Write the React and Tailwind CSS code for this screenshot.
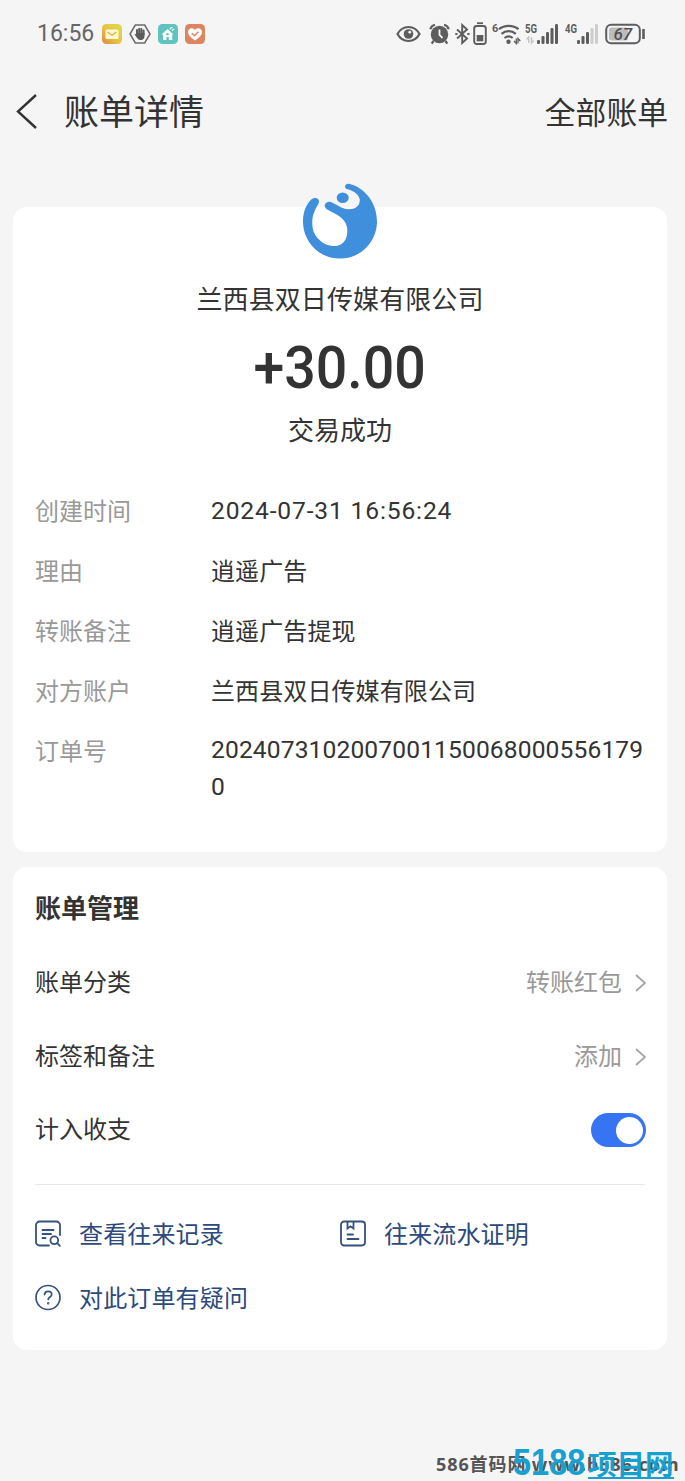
import React, { useState } from "react";

const details = [
  { label: "创建时间", value: "2024-07-31 16:56:24", type: "date" },
  { label: "理由", value: "逍遥广告" },
  { label: "转账备注", value: "逍遥广告提现" },
  { label: "对方账户", value: "兰西县双日传媒有限公司" },
  { label: "订单号", value: "20240731020070011500680005561790", type: "number" },
];

const MailIcon = () => (
  <svg width="20" height="20" viewBox="0 0 20 20">
    <defs>
      <linearGradient id="mail" x1="1" y1="0" x2="0" y2="1">
        <stop offset="0" stopColor="#d9e04a" />
        <stop offset="0.55" stopColor="#e9c043" />
        <stop offset="1" stopColor="#d98b3c" />
      </linearGradient>
    </defs>
    <rect width="20" height="20" rx="4.5" fill="url(#mail)" />
    <rect x="3.5" y="5.5" width="13" height="9.5" rx="1.5" fill="#fdf7d4" />
    <path d="M5.5 8l4.5 3.2L14.5 8" fill="none" stroke="#e0b23f" strokeWidth="1.3" />
  </svg>
);

const HandIcon = () => (
  <svg width="22" height="20" viewBox="0 0 22 20" fill="none">
    <path d="M6.3 1h9.400L21 10l-5.300 9H6.300L1 10z" stroke="#6a6a6a" strokeWidth="1.5" />
    <path
      d="M8 10V6M10.200 9.500V4.700M12.400 9.500V5M14.600 10.500V6.500"
      stroke="#5c5c5c"
      strokeWidth="2"
      strokeLinecap="round"
    />
    <path d="M7.100 9h8.400v3.200c0 2.300-1.500 3.800-3.600 3.800-2 0-3-.8-4-2.300L5.600 10.600c.5-.9 1.100-.7 1.500-.2z" fill="#5c5c5c" />
  </svg>
);

const HouseIcon = () => (
  <svg width="20" height="20" viewBox="0 0 20 20">
    <rect width="20" height="20" rx="4.500" fill="#5fc3c0" />
    <path d="M3.500 10.500L9.500 5l6 5.500h-1.300V16h-3.400v-3H8.400v3H5v-5.500z" fill="#fff" />
    <circle cx="9.500" cy="10.200" r="1.200" fill="#5fc3c0" />
    <path d="M12 5.500c0-1.500 1-2 2.500-1.700M14.300 7c0-1.200.8-1.700 2-1.500" fill="none" stroke="#e9fffd" strokeWidth="1.200" />
  </svg>
);

const HeartIcon = () => (
  <svg width="20" height="20" viewBox="0 0 20 20">
    <rect width="20" height="20" rx="4.500" fill="#dc8560" />
    <path d="M10 16.500C5.500 13.500 3 11 3 8c0-4 5-5.200 7-2 2-3.200 7-2 7 2 0 3-2.500 5.500-7 8.500z" fill="#fff" />
    <path d="M6.800 9.300l2.700 2.500 3.900-4" fill="none" stroke="#dc8560" strokeWidth="1.500" />
  </svg>
);

const EyeIcon = () => (
  <svg width="25" height="18" viewBox="0 0 25 18">
    <path d="M1.500 9C4 4.300 8 2 12.500 2S21 4.300 23.500 9C21 13.700 17 16 12.500 16S4 13.700 1.500 9z" fill="none" stroke="#5d5d5d" strokeWidth="2.200" />
    <circle cx="12.500" cy="9" r="4.800" fill="#5d5d5d" />
    <circle cx="13.800" cy="7.200" r="1.400" fill="#f5f5f5" />
  </svg>
);

const AlarmIcon = () => (
  <svg width="21" height="22" viewBox="0 0 21 22" fill="none" stroke="#5d5d5d">
    <circle cx="10.500" cy="11.500" r="8.700" fill="#5d5d5d" stroke="none" />
    <path d="M1.300 6.200C2 3.700 3.700 2.200 6 1.700M19.700 6.200C19 3.700 17.300 2.200 15 1.700" strokeWidth="2.200" />
    <path d="M4.500 18l-1.800 2.600M16.500 18l1.800 2.600" strokeWidth="2.200" />
    <path d="M10.500 6.500v5.500l3 3" stroke="#f5f5f5" strokeWidth="1.800" />
  </svg>
);

const BluetoothIcon = () => (
  <svg width="15" height="22" viewBox="0 0 15 22" fill="none" stroke="#5d5d5d" strokeWidth="1.900">
    <path d="M2 6.500l10 9-4.800 4.500V2L12 6.500l-10 9" />
    <path d="M.3 11h2.200M12.300 11h2.200" />
  </svg>
);

const DeviceBatteryIcon = () => (
  <svg width="14" height="23" viewBox="0 0 14 23">
    <path d="M4 1.200h6" stroke="#5d5d5d" strokeWidth="1.800" />
    <rect x="1.200" y="4" width="11.600" height="18" rx="2.500" fill="none" stroke="#5d5d5d" strokeWidth="1.900" />
    <rect x="3.700" y="13" width="6.600" height="6.300" fill="#5d5d5d" />
  </svg>
);

const WifiIcon = () => (
  <svg width="29" height="22" viewBox="0 0 29 22" fill="none" stroke="#5d5d5d">
    <text x="0" y="9" fontSize="11" fontWeight="700" fontFamily="Roboto, sans-serif" fill="#5d5d5d" stroke="none">6</text>
    <path d="M7 6.200c5.500-4.500 14-4.500 19.500 0M9.500 10.800c4.300-3.600 10-3.600 14.300 0M12.500 15c2.600-2 5.600-2 8.200 0" strokeWidth="2.200" />
    <circle cx="16.500" cy="18.800" r="2.200" fill="#5d5d5d" stroke="none" />
    <path d="M24.300 15.500v5L22 18M26 20.500v-5l2.300 2.500" strokeWidth="1.300" />
  </svg>
);

const SignalIcon = ({ label, strength, arrows }) => (
  <svg width="34" height="22" viewBox="0 0 34 22">
    <text x="0" y="9.500" fontSize="12" fontWeight="700" fontFamily="Roboto, sans-serif" fill="#5d5d5d" textLength="12" lengthAdjust="spacingAndGlyphs">
      {label}
    </text>
    {arrows && <path d="M1.500 16.500L3.700 14v6M6.500 14v6l2.200-2.500" fill="none" stroke="#c4c4c4" strokeWidth="1.400" />}
    {[4, 8, 12, 16, 20].map((h, i) => (
      <rect key={h} x={12 + i * 4.5} y={21 - h} width="3" height={h} rx="1.200" fill={i < strength ? "#5d5d5d" : "#cdcdcd"} />
    ))}
  </svg>
);

const BatteryIcon = () => (
  <svg width="41" height="22" viewBox="0 0 41 22">
    <rect x="1.200" y="1.700" width="33.600" height="18.600" rx="5" fill="none" stroke="#5d5d5d" strokeWidth="2" />
    <rect x="4" y="4.500" width="19" height="13" rx="2.500" fill="#bdbdbd" />
    <text x="8.500" y="17" fontSize="17" fontStyle="italic" fontWeight="500" fontFamily="Roboto, sans-serif" fill="#505050">67</text>
    <path d="M38.500 6v10" stroke="#5d5d5d" strokeWidth="2.600" />
  </svg>
);

const CompanyLogo = () => (
  <svg width="76" height="76" viewBox="0 0 76 76" className="shrink-0">
    <path
      d="M16.500 20.500C18.500 16 14 13 9.500 16.300C3.500 22 1 30 1 38.500C1 59 17.500 75.600 38 75.600C58.500 75.600 75 59 75 38.500C75 21 64 5 47 .8C43 .3 41.500 4.500 44.700 6C50 7.300 56 10 57.700 16C58.500 23 53 26.500 46.500 26.300C39 26 34 20.500 27.800 18.700C23 18.500 20.800 23 24.700 26.300C30 29.500 36 31.500 40 35.500C43.500 38.500 45.500 43 45.300 48C45.500 57 40 63 33 63C26 63 20.500 60.500 16.500 56C11.500 51 10 45 10.300 38C10.600 31 13.500 26 16.500 20.500Z"
      fill="#408fdd"
    />
    <ellipse cx="40.700" cy="14.700" rx="6" ry="5.200" fill="#408fdd" />
  </svg>
);

const RecordsIcon = () => (
  <svg width="26" height="27" viewBox="0 0 26 27" fill="none" stroke="#35517f" strokeWidth="1.800" strokeLinecap="round">
    <path d="M14 25.500H4.500a3.500 3.500 0 01-3.500-3.500V5a3.500 3.500 0 013.500-3.500H21.500A3.500 3.500 0 0125 5v10" />
    <path d="M7.500 10h11M7.500 14h8.500M7.500 18h3" />
    <circle cx="19.300" cy="20.300" r="3.900" />
    <path d="M22.300 23.200l2.500 2.600" />
  </svg>
);

const CertificateIcon = () => (
  <svg width="26" height="27" viewBox="0 0 26 27" fill="none" stroke="#35517f" strokeWidth="1.800" strokeLinecap="round">
    <rect x="1" y="1.500" width="24" height="24" rx="3.200" />
    <path d="M7.500 1.800v6.700l3-2.200 3 2.200V1.800" />
    <path d="M7.500 14.500h5.500M7.500 19h11" />
  </svg>
);

const QuestionIcon = () => (
  <svg width="26" height="27" viewBox="0 0 26 27" fill="none" stroke="#35517f" strokeWidth="1.700" strokeLinecap="round">
    <circle cx="13" cy="13.500" r="12" />
    <path d="M9.500 10.700c.2-2.200 1.600-3.400 3.600-3.400s3.600 1.300 3.600 3.200c0 2.500-3.500 2.600-3.500 5" />
    <circle cx="13.200" cy="19.300" r=".4" fill="#35517f" />
  </svg>
);

const Chevron = () => (
  <svg width="11" height="18" viewBox="0 0 11 18" fill="none" stroke="#a3a3a3" strokeWidth="1.700">
    <path d="M1 1l9 8-9 8" />
  </svg>
);

const valueStyles = {
  date: "-mb-px font-['Roboto',sans-serif] text-[24.6px] leading-[37px] tracking-[0.85px]",
  number: "font-['Roboto',sans-serif] text-[24.6px] leading-[37px] tracking-[0.12px] -mt-px",
  text: "tracking-[0.1px]",
};

const ManageRow = ({ label, value }) => (
  <button className="flex h-[74px] w-full items-center justify-between">
    <span>{label}</span>
    <span className="-mr-px flex items-center gap-[13px] text-[#999]">
      {value}
      <span className="pt-1">
        <Chevron />
      </span>
    </span>
  </button>
);

const App = () => {
  const [counted, setCounted] = useState(true);

  return (
    <div className="relative h-[1481px] w-full overflow-hidden bg-[#f5f5f5] font-['Noto_Sans_CJK_SC',sans-serif] text-[24px] leading-[36px] text-[#333]">
      {/* Status bar */}
      <div className="flex h-[67px] items-center justify-between pr-[39px] pl-[37px]">
        <div className="flex items-center gap-[7px]">
          <span className="w-[58px] font-['Roboto',sans-serif] text-[23px] whitespace-nowrap text-[#666]">16:56</span>
          <MailIcon />
          <HandIcon />
          <HouseIcon />
          <HeartIcon />
        </div>
        <div className="flex items-center">
          <EyeIcon />
          <span className="ml-2">
            <AlarmIcon />
          </span>
          <span className="ml-[5px]">
            <BluetoothIcon />
          </span>
          <span className="ml-[3px]">
            <DeviceBatteryIcon />
          </span>
          <span className="ml-[5px]">
            <WifiIcon />
          </span>
          <span className="ml-1">
            <SignalIcon label="5G" strength={5} arrows />
          </span>
          <span className="ml-1.5">
            <SignalIcon label="4G" strength={3} />
          </span>
          <span className="ml-1.5">
            <BatteryIcon />
          </span>
        </div>
      </div>

      {/* Title bar */}
      <header className="flex h-[88px] items-center justify-between pr-[17px] pl-4">
        <div className="flex items-center">
          <svg width="21" height="36" viewBox="0 0 21 36" fill="none" stroke="#333" strokeWidth="2.400">
            <path d="M20 2L2 18.500 20 35" />
          </svg>
          <h1 className="ml-[27px] pb-[3px] text-[35px]">账单详情</h1>
        </div>
        <button className="text-[30.8px]">全部账单</button>
      </header>

      <main className="mt-[52px] mr-[18px] ml-[13px] flex flex-col gap-[15px]">
        {/* Bill */}
        <section className="h-[645px] rounded-[14px] bg-white px-[22px]">
          <div className="-mt-6 flex flex-col items-center">
            <CompanyLogo />
            <h2 className="mt-[21px] text-[26px] tracking-[0.1px]">兰西县双日传媒有限公司</h2>
            <p className="mt-[19px] scale-x-[0.94] font-['Roboto',sans-serif] text-[59px] leading-[66px] font-medium">+30.00</p>
            <p className="mt-2.5 text-[26px]">交易成功</p>
          </div>
          <dl className="mt-[45px] flex flex-col gap-6">
            {details.map((item) => (
              <div key={item.label} className="flex">
                <dt className="w-[176px] shrink-0 text-[#999]">{item.label}</dt>
                <dd className={`min-w-0 flex-1 break-all ${valueStyles[item.type || "text"]}`}>{item.value}</dd>
              </div>
            ))}
          </dl>
        </section>

        {/* Bill management */}
        <section className="h-[483px] rounded-[14px] bg-white px-[22px] pt-[22px]">
          <h2 className="mb-[19px] text-[26px] font-bold">账单管理</h2>
          <ManageRow label="账单分类" value="转账红包" />
          <ManageRow label="标签和备注" value="添加" />
          <div className="-mt-px flex h-[74px] items-center justify-between">
            <span>计入收支</span>
            <button
              role="switch"
              aria-checked={counted}
              aria-label="计入收支"
              onClick={() => setCounted(!counted)}
              className={`mt-1 -mr-px flex h-[34px] w-[55px] items-center rounded-full px-[3px] ${
                counted ? "justify-end bg-[#3674f3]" : "justify-start bg-[#ddd]"
              }`}
            >
              <span className="h-[27px] w-[27px] rounded-full bg-white" />
            </button>
          </div>
          <div className="mt-[19px] grid grid-cols-2 gap-y-7 border-t border-[#e8e8e8] pt-[30px] tracking-[0.15px] text-[#2d4a7c]">
            <a className="flex items-center gap-[18px]">
              <RecordsIcon />
              查看往来记录
            </a>
            <a className="flex items-center gap-[18px]">
              <CertificateIcon />
              往来流水证明
            </a>
            <a className="flex items-center gap-[18px]">
              <QuestionIcon />
              对此订单有疑问
            </a>
          </div>
        </section>
      </main>

      {/* Site marks */}
      <div className="absolute top-[1451px] left-[436px] font-['Open_Sans','Noto_Sans_CJK_SC',sans-serif] text-[18px] leading-[26px] font-bold tracking-[0.9px] whitespace-nowrap text-[#555]">
        586首码网 www.b586.com
      </div>
      <div className="absolute top-[1446px] left-[513px] flex h-[34px] items-center whitespace-nowrap text-[#18a0cf]">
        <span className="w-[75px] origin-left scale-x-[0.88] font-['Liberation_Sans',sans-serif] text-[37px] leading-8 font-bold">5188</span>
        <span className="h-[31px] border-b-2 border-[#18a0cf] text-[28.5px] leading-[29px] font-bold">项目网</span>
      </div>
    </div>
  );
};

export default App;
